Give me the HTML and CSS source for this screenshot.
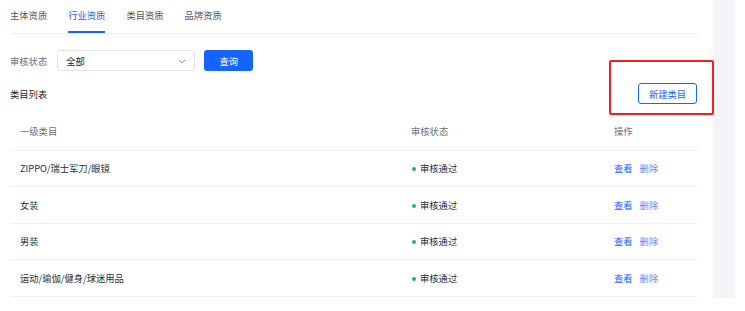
FILE: index.html
```html
<!DOCTYPE html>
<html lang="zh-CN">
<head>
    <meta charset="UTF-8">
    <title>行业资质</title>
    <link rel="stylesheet" href="styles.css">
</head>
<body>
    <div class="page">
        <div class="main">
            <div class="tabs">
                <div class="tab">主体资质</div>
                <div class="tab active">行业资质</div>
                <div class="tab">类目资质</div>
                <div class="tab">品牌资质</div>
            </div>

            <div class="filter">
                <span class="filter-label">审核状态</span>
                <div class="select">
                    <span>全部</span>
                    <svg class="arrow" width="8" height="5" viewBox="0 0 8 5"><path d="M1 1l3 3 3-3" fill="none" stroke="#999" stroke-width="1"/></svg>
                </div>
                <button class="btn-primary">查询</button>
            </div>

            <div class="list-head">
                <span class="list-title">类目列表</span>
                <button class="btn-outline">新建类目</button>
            </div>

            <table class="grid">
                <thead>
                    <tr>
                        <th class="col-name">一级类目</th>
                        <th class="col-status">审核状态</th>
                        <th class="col-op">操作</th>
                    </tr>
                </thead>
                <tbody>
                    <tr>
                        <td>ZIPPO/瑞士军刀/眼镜</td>
                        <td><span class="dot"></span>审核通过</td>
                        <td class="ops"><a class="view">查看</a><a class="del">删除</a></td>
                    </tr>
                    <tr>
                        <td>女装</td>
                        <td><span class="dot"></span>审核通过</td>
                        <td class="ops"><a class="view">查看</a><a class="del">删除</a></td>
                    </tr>
                    <tr>
                        <td>男装</td>
                        <td><span class="dot"></span>审核通过</td>
                        <td class="ops"><a class="view">查看</a><a class="del">删除</a></td>
                    </tr>
                    <tr>
                        <td>运动/瑜伽/健身/球迷用品</td>
                        <td><span class="dot"></span>审核通过</td>
                        <td class="ops"><a class="view">查看</a><a class="del">删除</a></td>
                    </tr>
                </tbody>
            </table>
        </div>
        <div class="side"></div>
    </div>
    <div class="mark"></div>
</body>
</html>
```

FILE: styles.css
```css
* {
    margin: 0;
    padding: 0;
    box-sizing: border-box;
}

body {
    font-family: "Noto Sans CJK SC", "Noto Sans", sans-serif;
    font-size: 9.3px;
    color: #2b2f36;
    background-color: white;
    width: 745px;
    height: 311px;
    overflow: hidden;
    position: relative;
}

.page {
    display: flex;
    align-items: flex-start;
}

.main {
    width: 713px;
    padding: 0 15px 0 10px;
}

.side {
    width: 22px;
    height: 298px;
    background-color: #f5f5f9;
}

/* tabs */
.tabs {
    display: flex;
    gap: 21px;
    height: 34px;
    border-bottom: 1px solid #efefef;
}

.tab {
    height: 33px;
    line-height: 31px;
    color: #51565d;
    border-bottom: 2px solid transparent;
}

.tab.active {
    color: #1664ff;
    border-bottom-color: #1664ff;
}

/* filter */
.filter {
    display: flex;
    align-items: center;
    margin-top: 16px;
    height: 21px;
}

.filter-label {
    color: #6b7078;
    margin-right: 10px;
}

.select {
    width: 138px;
    height: 21px;
    border: 1px solid #e3e4e6;
    border-radius: 3px;
    display: flex;
    align-items: center;
    justify-content: space-between;
    padding: 0 8px 0 8px;
    color: #1f2329;
}

.arrow {
    margin-top: 1px;
}

.btn-primary {
    margin-left: 9px;
    width: 49px;
    height: 21px;
    border: none;
    border-radius: 3px;
    background-color: #1664ff;
    color: white;
    font-family: inherit;
    font-size: 9.3px;
}

/* list header */
.list-head {
    display: flex;
    align-items: center;
    justify-content: space-between;
    margin-top: 12px;
    height: 21px;
    padding-right: 1px;
}

.list-title {
    color: #1f2329;
}

.btn-outline {
    width: 59px;
    height: 21px;
    border: 1px solid #1664ff;
    border-radius: 3px;
    background-color: white;
    color: #1664ff;
    font-family: inherit;
    font-size: 9.3px;
}

/* table */
.grid {
    width: 100%;
    margin-top: 9px;
    border-collapse: collapse;
    table-layout: fixed;
}

.grid th,
.grid td {
    text-align: left;
    font-weight: normal;
    padding: 0 10px;
    border-bottom: 1px solid #f0f1f2;
}

.grid th {
    height: 37px;
    color: #6b7078;
}

.grid td {
    height: 36.6px;
}

.col-name {
    width: 391px;
}

.col-status {
    width: 203px;
}

.dot {
    display: inline-block;
    width: 4px;
    height: 4px;
    border-radius: 50%;
    background-color: #2ab45a;
    margin: 0 4px 1px 1px;
    vertical-align: middle;
}

.ops a {
    cursor: pointer;
}

.view {
    color: #1664ff;
    margin-right: 7px;
}

.del {
    color: #6d86f6;
}

/* annotation box */
.mark {
    position: absolute;
    left: 609px;
    top: 60px;
    width: 105px;
    height: 55px;
    border: 2px solid #f71e1e;
    border-radius: 2px;
}
```
